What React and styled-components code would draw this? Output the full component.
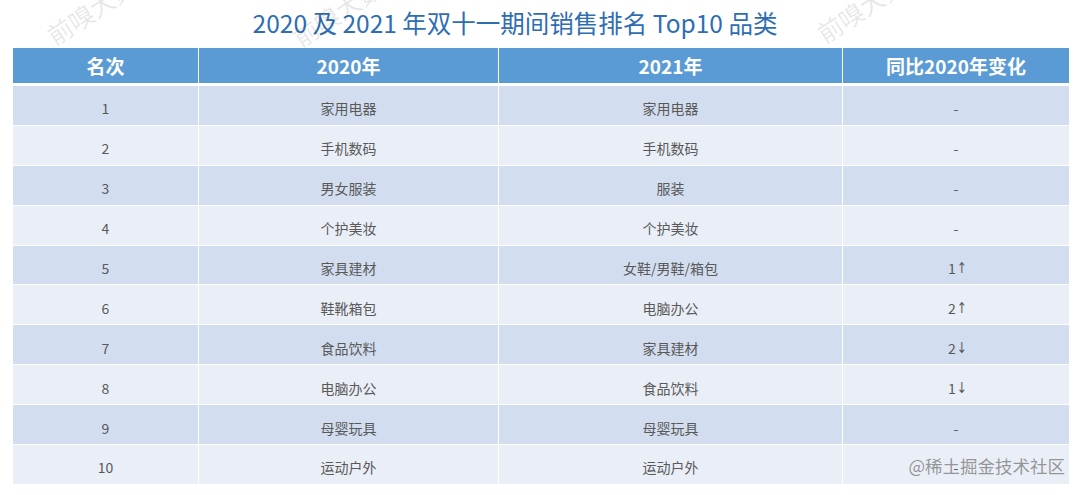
import React from "react";
import styled, { createGlobalStyle } from "styled-components";

const Global = createGlobalStyle`
  html, body { margin: 0; padding: 0; background: #ffffff; }
  body { font-family: "Noto Sans CJK SC", "Noto Sans", sans-serif; }
`;

const Page = styled.div`
  position: relative;
  width: 1080px;
  height: 495px;
  overflow: hidden;
  background: #ffffff;
`;

const Title = styled.h1`
  margin: 0;
  height: 46px;
  display: flex;
  align-items: center;
  justify-content: center;
  padding-right: 50px;
  padding-bottom: 2px;
  box-sizing: border-box;
  font-size: 24.5px;
  font-weight: 400;
  color: #2f6db3;
`;

const Table = styled.div`
  margin: 2px 11px 0 13px;
  display: flex;
  flex-direction: column;
  gap: 1px;
`;

const Row = styled.div`
  display: grid;
  grid-template-columns: 185px 299px 343px 226px;
  column-gap: 1px;
  height: ${(p) => (p.$head ? "35px" : "38.9px")};
  margin-bottom: ${(p) => (p.$head ? "2px" : "0")};
`;

const Cell = styled.div`
  display: flex;
  align-items: center;
  justify-content: center;
  box-sizing: border-box;
  background: ${(p) => (p.$head ? "#5b9bd5" : p.$odd ? "#d2deef" : "#eaeff7")};
  color: ${(p) => (p.$head ? "#ffffff" : "#595959")};
  font-size: ${(p) => (p.$head ? "19px" : "14px")};
  font-weight: ${(p) => (p.$head ? 700 : 400)};
  padding-top: ${(p) => (p.$head ? "0" : "6px")};
`;

const Arrow = styled.span`
  font-family: "DejaVu Sans", sans-serif;
  font-size: 15px;
  display: inline-block;
  width: 8px;
  text-align: center;
  transform: scaleX(0.8);
`;

const Watermark = styled.div`
  position: absolute;
  left: ${(p) => p.$x}px;
  top: ${(p) => p.$y}px;
  transform: rotate(-33deg);
  transform-origin: left bottom;
  font-size: 25px;
  line-height: 25px;
  color: rgba(0, 0, 0, 0.1);
  white-space: nowrap;
  pointer-events: none;
`;

const Credit = styled.div`
  position: absolute;
  right: 15px;
  bottom: 17px;
  font-size: 17.5px;
  color: rgba(120, 120, 120, 0.75);
  white-space: nowrap;
  pointer-events: none;
`;

const rows = [
  ["1", "家用电器", "家用电器", "-"],
  ["2", "手机数码", "手机数码", "-"],
  ["3", "男女服装", "服装", "-"],
  ["4", "个护美妆", "个护美妆", "-"],
  ["5", "家具建材", "女鞋/男鞋/箱包", "1↑"],
  ["6", "鞋靴箱包", "电脑办公", "2↑"],
  ["7", "食品饮料", "家具建材", "2↓"],
  ["8", "电脑办公", "食品饮料", "1↓"],
  ["9", "母婴玩具", "母婴玩具", "-"],
  ["10", "运动户外", "运动户外", "-"],
];

const head = ["名次", "2020年", "2021年", "同比2020年变化"];

function renderChange(text) {
  const m = text.match(/^(\d)([↑↓])$/);
  if (!m) return text;
  return (
    <>
      {m[1]}
      <Arrow>{m[2]}</Arrow>
    </>
  );
}

export default function App() {
  return (
    <Page>
      <Global />
      <Title>2020 及 2021 年双十一期间销售排名 Top10 品类</Title>
      <Table>
        <Row $head>
          {head.map((h) => (
            <Cell key={h} $head>
              {h}
            </Cell>
          ))}
        </Row>
        {rows.map((r, i) => (
          <Row key={r[0]}>
            {r.map((c, j) => (
              <Cell key={j} $odd={i % 2 === 0}>
                {j === 3 ? renderChange(c) : c}
              </Cell>
            ))}
          </Row>
        ))}
      </Table>
      <Watermark $x={56} $y={23}>前嗅大数据</Watermark>
      <Watermark $x={302} $y={25}>前嗅大数据</Watermark>
      <Watermark $x={826} $y={21}>前嗅大数据</Watermark>
      <Credit>@稀土掘金技术社区</Credit>
    </Page>
  );
}
